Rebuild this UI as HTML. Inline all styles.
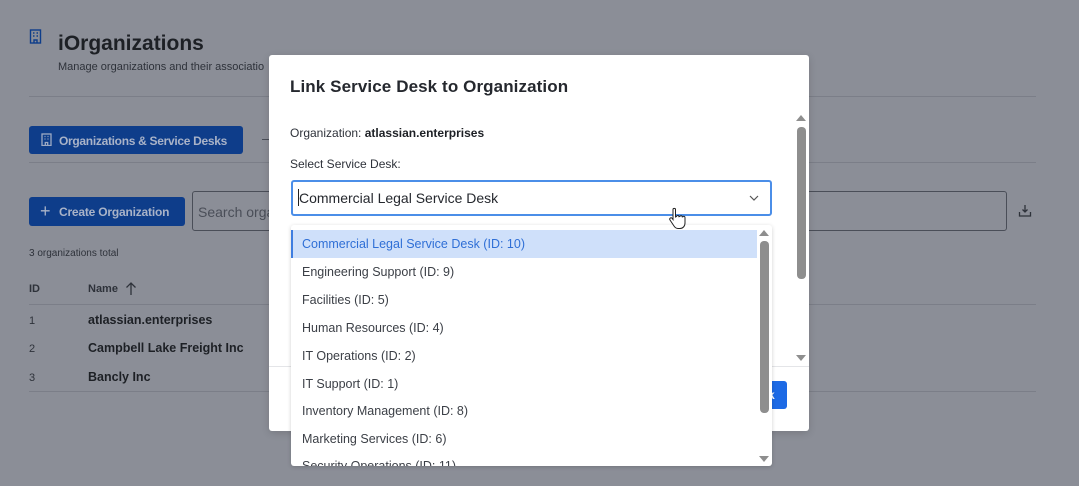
<!DOCTYPE html>
<html><head><style>
*{box-sizing:border-box;margin:0;padding:0}
body{width:1079px;height:486px;overflow:hidden;background:#8b8e97;font-family:"Liberation Sans",sans-serif;position:relative;color:#1d2025}
.a{position:absolute;white-space:nowrap}
.ln{position:absolute;height:1px;background:#7b7e88}
.opt{position:absolute;left:11px;font-size:12.5px;color:#3b3f46}
.ar{position:absolute;width:0;height:0;border-left:5px solid transparent;border-right:5px solid transparent}
</style></head><body>
<svg class="a" style="left:29px;top:29px" width="13" height="15" viewBox="0 0 13 15"><g fill="none" stroke="#0e3d8a" stroke-width="1.4"><rect x="1.5" y="1" width="10" height="13"/><path d="M4 4h1.5M7.5 4H9M4 7h1.5M7.5 7H9M5 14v-3h3v3"/></g></svg>
<div class="a" style="left:58px;top:32px;font-size:21px;font-weight:bold;color:#1d2025">iOrganizations</div>
<div class="a" style="left:58px;top:61px;font-size:11px;color:#2e323a">Manage organizations and their associatio</div>
<div class="ln" style="left:29px;top:96px;width:1007px"></div>
<div class="a" style="left:29px;top:126px;width:214px;height:28px;background:#0e3d8a;border-radius:3px"></div>
<svg class="a" style="left:41px;top:133px" width="11" height="13" viewBox="0 0 11 13"><g fill="none" stroke="#9eaac3" stroke-width="1.3"><rect x="1" y="1" width="9" height="11.5"/><path d="M3.5 3.5h1M6.5 3.5h1M3.5 6h1M6.5 6h1M4.3 12.5v-3h2.4v3"/></g></svg>
<div class="a" style="left:59px;top:134px;font-size:12px;font-weight:bold;color:#a9b3c8;letter-spacing:-0.3px">Organizations &amp; Service Desks</div>
<div class="a" style="left:262px;top:139px;width:8px;height:1px;background:#4a4e58"></div>
<div class="ln" style="left:29px;top:162px;width:1007px"></div>
<div class="a" style="left:29px;top:197px;width:156px;height:29px;background:#0e3d8a;border-radius:3px"></div>
<div class="a" style="left:40px;top:202px;font-size:18px;color:#a9b3c8;line-height:18px">+</div>
<div class="a" style="left:59px;top:205px;font-size:12px;font-weight:bold;color:#a9b3c8;letter-spacing:-0.2px">Create Organization</div>
<div class="a" style="left:192px;top:191px;width:815px;height:40px;border:1px solid #4a4e58;border-radius:3px"></div>
<div class="a" style="left:198px;top:204px;font-size:14px;color:#4a4e58">Search orga</div>
<svg class="a" style="left:1018px;top:204px" width="14" height="14" viewBox="0 0 14 14"><g fill="none" stroke="#2e323a" stroke-width="1.3"><path d="M7 1v7M4.5 5.5L7 8l2.5-2.5M1.5 8v4h11V8"/></g></svg>
<div class="a" style="left:29px;top:248px;font-size:10px;color:#2e323a">3 organizations total</div>
<div class="a" style="left:29px;top:283px;font-size:11px;font-weight:bold;color:#2e323a">ID</div>
<div class="a" style="left:88px;top:283px;font-size:11px;font-weight:bold;color:#2e323a">Name</div>
<svg class="a" style="left:125px;top:281px" width="12" height="15" viewBox="0 0 12 15"><path d="M6 14V2M1.5 6.5L6 2l4.5 4.5" fill="none" stroke="#2e323a" stroke-width="1.3"/></svg>
<div class="ln" style="left:29px;top:304px;width:1007px"></div>
<div class="a" style="left:29px;top:315px;font-size:11px;color:#2e323a">1</div>
<div class="a" style="left:88px;top:313px;font-size:12.5px;font-weight:bold">atlassian.enterprises</div>
<div class="a" style="left:29px;top:343px;font-size:11px;color:#2e323a">2</div>
<div class="a" style="left:88px;top:341px;font-size:12.5px;font-weight:bold">Campbell Lake Freight Inc</div>
<div class="a" style="left:29px;top:372px;font-size:11px;color:#2e323a">3</div>
<div class="a" style="left:88px;top:370px;font-size:12.5px;font-weight:bold">Bancly Inc</div>
<div class="ln" style="left:29px;top:391px;width:1007px"></div>

<div class="a" style="left:269px;top:55px;width:540px;height:376px;background:#fff;border-radius:3px;box-shadow:0 2px 8px rgba(0,0,0,.15)">
 <div class="a" style="left:21px;top:22px;font-size:17px;font-weight:bold;color:#25282e;letter-spacing:0.1px">Link Service Desk to Organization</div>
 <div class="a" style="left:21px;top:71px;font-size:12px;color:#2e323a">Organization: <b style="color:#1d2025">atlassian.enterprises</b></div>
 <div class="a" style="left:21px;top:102px;font-size:12px;color:#2e323a">Select Service Desk:</div>
 <div class="a" style="left:22px;top:125px;width:481px;height:36px;border:2px solid #4b8ee8;border-radius:3px"></div>
 <div class="a" style="left:29px;top:134px;width:1px;height:17px;background:#222"></div>
 <div class="a" style="left:30px;top:135px;font-size:14px;color:#25282e">Commercial Legal Service Desk</div>
 <svg class="a" style="left:480px;top:140px" width="10" height="7" viewBox="0 0 10 7"><path d="M1 1l4 4 4-4" fill="none" stroke="#555" stroke-width="1.2"/></svg>
 <div class="ar" style="left:527px;top:60px;border-bottom:6px solid #8e8e8e"></div>
 <div class="a" style="left:528px;top:72px;width:9px;height:152px;background:#8e8e8e;border-radius:4px"></div>
 <div class="ar" style="left:527px;top:300px;border-top:6px solid #8e8e8e"></div>
 <div class="a" style="left:0;top:311px;width:540px;height:1px;background:#e4e5e8"></div>
 <div class="a" style="left:491px;top:326px;width:27px;height:28px;background:#1d6ae5;border-radius:3px"></div>
 <div class="a" style="left:499px;top:333px;font-size:12px;font-weight:bold;color:#fff">k</div>
</div>

<div class="a" style="left:291px;top:225px;width:481px;height:241px;background:#fff;box-shadow:0 1px 4px rgba(0,0,0,.18);border-radius:3px;overflow:hidden">
 <div class="a" style="left:0;top:5px;width:466px;height:28px;background:#cfe0fa;border-left:2px solid #3e7de0"></div>
 <div class="opt" style="top:12px;color:#2f6fd6">Commercial Legal Service Desk (ID: 10)</div>
 <div class="opt" style="top:40px">Engineering Support (ID: 9)</div>
 <div class="opt" style="top:68px">Facilities (ID: 5)</div>
 <div class="opt" style="top:96px">Human Resources (ID: 4)</div>
 <div class="opt" style="top:124px">IT Operations (ID: 2)</div>
 <div class="opt" style="top:152px">IT Support (ID: 1)</div>
 <div class="opt" style="top:179px">Inventory Management (ID: 8)</div>
 <div class="opt" style="top:207px">Marketing Services (ID: 6)</div>
 <div class="opt" style="top:234px">Security Operations (ID: 11)</div>
 <div class="ar" style="left:468px;top:5px;border-bottom:6px solid #8e8e8e"></div>
 <div class="a" style="left:469px;top:16px;width:9px;height:172px;background:#8e8e8e;border-radius:4px"></div>
 <div class="ar" style="left:468px;top:231px;border-top:6px solid #8e8e8e"></div>
</div>
<svg class="a" style="left:668px;top:207px" width="18" height="24" viewBox="0 0 18 24"><path d="M5 2.5c0-1.5 2.5-1.5 2.5 0V10l1-.5c.5-1.5 2.5-1.3 2.5.2l.8-.2c.5-1.2 2.5-1 2.5.4l.5 0c.6-1 2.2-.7 2.2.6V16c0 3-2 5.5-5 5.5H10c-2 0-3-1-4-2.5L2 13c-1-1.5.8-3 2-1.8L5 12.5z" fill="#fff" stroke="#222" stroke-width="1"/></svg>
</body></html>
